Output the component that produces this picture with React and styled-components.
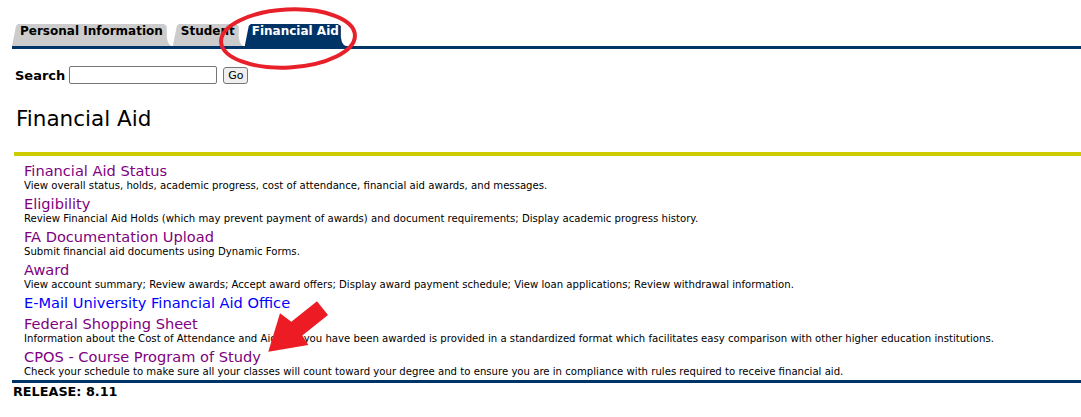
import React from "react";
import styled, { createGlobalStyle } from "styled-components";

const GlobalStyle = createGlobalStyle`
  html, body { margin: 0; padding: 0; background: #ffffff; }
  body { font-family: "DejaVu Sans", Verdana, sans-serif; color: #000000; }
  * { box-sizing: border-box; }
`;

const Page = styled.div`
  position: relative;
  width: 1081px;
  min-height: 417px;
  overflow: hidden;
`;

const TabBar = styled.nav`
  display: flex;
  align-items: flex-end;
  margin-left: 12px;
  padding-top: 24px;
  border-bottom: 3px solid #003366;
`;

const Tab = styled.a`
  display: block;
  height: 22px;
  margin-right: ${(p) => (p.$last ? 0 : 1)}px;
  padding: 0 ${(p) => (p.$active ? 7 : 9)}px 0 ${(p) => (p.$active ? 7 : 8)}px;
  font-size: 12px;
  font-weight: bold;
  line-height: 14px;
  white-space: nowrap;
  text-decoration: none;
  color: ${(p) => (p.$active ? "#ffffff" : "#000000")};
  background: ${(p) => (p.$active ? "#003366" : "#cccccc")};
  clip-path: polygon(
    0 100%,
    4px 2px,
    6px 0,
    calc(100% - 8px) 0,
    calc(100% - 5px) 2px,
    calc(100% - 5px) 13px,
    calc(100% - 4px) 18px,
    calc(100% - 2px) 21px,
    100% 100%
  );
`;

const SearchRow = styled.form`
  display: flex;
  align-items: center;
  height: 18px;
  margin: 17px 0 0 15px;
`;

const SearchLabel = styled.label`
  font-size: 13px;
  font-weight: bold;
  line-height: 15px;
  margin-right: 4px;
`;

const SearchInput = styled.input`
  width: 148px;
  height: 18px;
  border: 1px solid #767676;
  border-radius: 2px;
  background: #ffffff;
  padding: 0 2px;
  margin: 0 6px 0 0;
`;

const GoButton = styled.button`
  width: 25px;
  height: 17px;
  padding: 0;
  margin: 1px 0 0 0;
  font-family: "DejaVu Sans", Verdana, sans-serif;
  font-size: 11px;
  line-height: 13px;
  color: #000000;
  background: #efefef;
  border: 1px solid #767676;
  border-radius: 3px;
`;

const Heading = styled.h2`
  margin: 23px 0 0 16px;
  font-size: 21.5px;
  font-weight: normal;
  line-height: 24px;
`;

const YellowRule = styled.div`
  height: 4px;
  margin: 21px 0 0 14px;
  background: #cccc00;
`;

const MenuList = styled.ul`
  list-style: none;
  margin: 3px 0 0 0;
  padding: 0 0 2px 24px;
`;

const MenuItem = styled.li`
  padding-top: 3px;
`;

const MenuLink = styled.a`
  display: block;
  width: max-content;
  font-size: 14.6px;
  line-height: 18px;
  text-decoration: none;
  color: ${(p) => (p.$mail ? "#0000ff" : "#800080")};
`;

const MenuDesc = styled.div`
  font-size: 10.14px;
  line-height: 12px;
  white-space: nowrap;
`;

const Footer = styled.footer`
  margin-left: 12px;
  border-top: 3px solid #003366;
  padding: 1px 0 0 1px;
  font-size: 12.8px;
  font-weight: bold;
  line-height: 15px;
`;

const Overlay = styled.svg`
  position: absolute;
  left: 0;
  top: 0;
  pointer-events: none;
`;

const items = [
  {
    title: "Financial Aid Status",
    desc: "View overall status, holds, academic progress, cost of attendance, financial aid awards, and messages.",
  },
  {
    title: "Eligibility",
    desc: "Review Financial Aid Holds (which may prevent payment of awards) and document requirements; Display academic progress history.",
  },
  {
    title: "FA Documentation Upload",
    desc: "Submit financial aid documents using Dynamic Forms.",
  },
  {
    title: "Award",
    desc: "View account summary; Review awards; Accept award offers; Display award payment schedule; View loan applications; Review withdrawal information.",
  },
  { title: "E-Mail University Financial Aid Office", mail: true },
  {
    title: "Federal Shopping Sheet",
    desc: "Information about the Cost of Attendance and Aid that you have been awarded is provided in a standardized format which facilitates easy comparison with other higher education institutions.",
  },
  {
    title: "CPOS - Course Program of Study",
    desc: "Check your schedule to make sure all your classes will count toward your degree and to ensure you are in compliance with rules required to receive financial aid.",
  },
];

export default function App() {
  return (
    <Page>
      <GlobalStyle />
      <TabBar>
        <Tab href="#">Personal Information</Tab>
        <Tab href="#">Student</Tab>
        <Tab href="#" $active $last>
          Financial Aid
        </Tab>
      </TabBar>

      <SearchRow onSubmit={(e) => e.preventDefault()}>
        <SearchLabel htmlFor="kw">Search</SearchLabel>
        <SearchInput id="kw" type="text" />
        <GoButton type="submit">Go</GoButton>
      </SearchRow>

      <Heading>Financial Aid</Heading>
      <YellowRule />

      <MenuList>
        {items.map((it) => (
          <MenuItem key={it.title}>
            <MenuLink href="#" $mail={it.mail}>
              {it.title}
            </MenuLink>
            {it.desc && <MenuDesc>{it.desc}</MenuDesc>}
          </MenuItem>
        ))}
      </MenuList>

      <Footer>RELEASE: 8.11</Footer>

      <Overlay width="1081" height="417" viewBox="0 0 1081 417">
        <ellipse
          cx="288"
          cy="38.5"
          rx="67"
          ry="29"
          fill="none"
          stroke="#e8202a"
          strokeWidth="4"
          transform="rotate(-3 288 38.5)"
        />
        <polygon
          points="317,301.2 328,314.9 302.3,335.5 308.3,345 268.3,351.7 280,313.3 291.3,321.8"
          fill="#ed1c24"
        />
      </Overlay>
    </Page>
  );
}
